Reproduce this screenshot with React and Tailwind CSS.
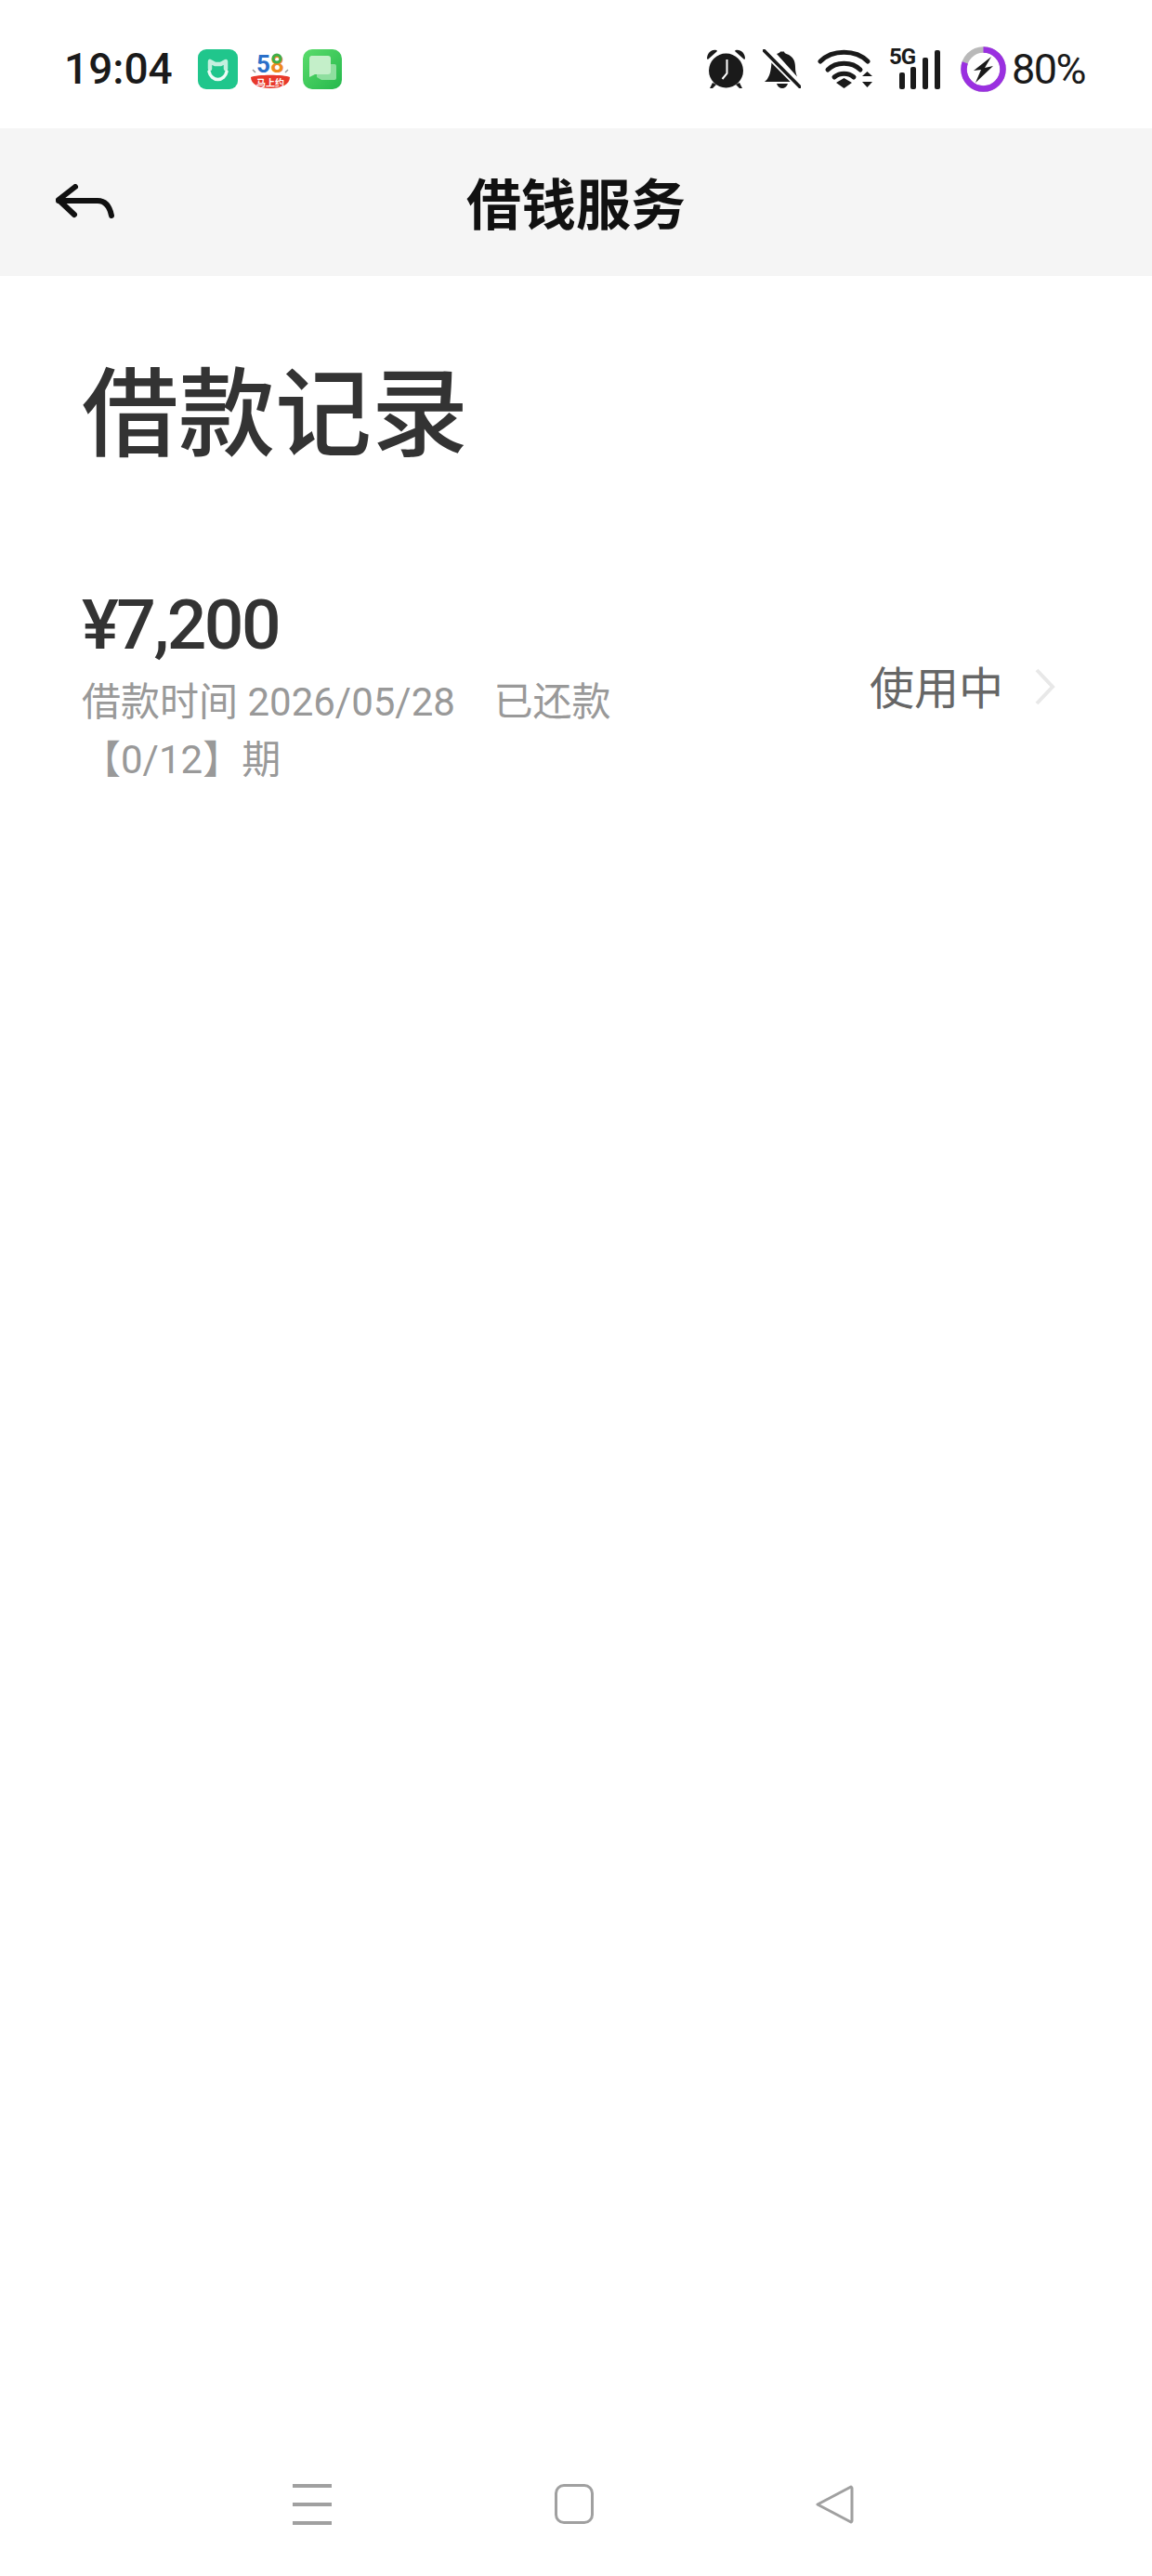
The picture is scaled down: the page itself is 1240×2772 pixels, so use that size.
const cjk = { fontFamily: '"Noto Sans CJK SC", sans-serif' };
const latin = { fontFamily: 'Roboto, "Noto Sans CJK SC", sans-serif' };

function MiHomeIcon() {
  return (
    <svg width="43" height="43" viewBox="0 0 43 43" className="shrink-0">
      <rect width="43" height="43" rx="9" fill="#20c68c" />
      <path d="M13 13l5.500 3h6l5.500-3v8M13 13v8" fill="none" stroke="#c4f0df" strokeWidth="4.500" strokeLinejoin="round" strokeLinecap="round" />
      <path d="M12 24c1 5 5 8.500 9.500 8.500S30 29 31 24" fill="none" stroke="#eefbf6" strokeWidth="3.500" strokeLinecap="round" />
    </svg>
  );
}

function Icon58() {
  return (
    <svg width="44" height="43" viewBox="0 0 44 43" className="shrink-0">
      <text x="7" y="25" fontFamily="Roboto, sans-serif" fontWeight="700" fontSize="26" fill="#2a6fc9">5</text>
      <text x="22" y="25" fontFamily="Roboto, sans-serif" fontWeight="700" fontSize="26" fill="#ef8a1e">8</text>
      <circle cx="29" cy="10" r="4" fill="none" stroke="#3fae49" strokeWidth="3" />
      <path d="M3 22l3 3M41 22l-3 3" stroke="#999" strokeWidth="1.500" />
      <path d="M1 30c6-3 36-3 42 0c0 8-9 12-21 12S1 38 1 30z" fill="#e8392b" />
      <text x="22" y="40" textAnchor="middle" fontFamily='"Noto Sans CJK SC", sans-serif' fontWeight="700" fontSize="10" fill="#fff">马上约</text>
    </svg>
  );
}

function ChatIcon() {
  return (
    <svg width="42" height="43" viewBox="0 0 42 43" className="shrink-0">
      <defs>
        <linearGradient id="chat" x1="0" y1="0" x2="1" y2="1">
          <stop offset="0" stopColor="#5bdc6c" />
          <stop offset="1" stopColor="#25b84c" />
        </linearGradient>
      </defs>
      <rect width="42" height="43" rx="10" fill="url(#chat)" />
      <path d="M15 16h19a2 2 0 0 1 2 2v13a2 2 0 0 1-2 2H20l-5-3z" fill="#8fdf9f" />
      <path d="M9 7h18a3 3 0 0 1 3 3v14a3 3 0 0 1-3 3H13l-6 3V10a3 3 0 0 1 2-3z" fill="#c4efc9" />
    </svg>
  );
}

function AlarmIcon() {
  return (
    <svg width="43" height="44" viewBox="0 0 43 44" className="shrink-0" fill="#1a1a1a">
      <path d="M1 11c0-6 5-10 10-9 1 0 1 1 .5 1.500L2.500 11.500c-.7.600-1.500.300-1.500-.5zM42 11c0-6-5-10-10-9-1 0-1 1-.5 1.500l9 8c.7.600 1.500.300 1.500-.5z" />
      <circle cx="21.500" cy="24" r="18.500" />
      <path d="M7 37l-3 6h3l4-4zM36 37l3 6h-3l-4-4z" />
      <path d="M22.500 12v15l-5 6" fill="none" stroke="#fff" strokeWidth="2" />
    </svg>
  );
}

function BellOffIcon() {
  return (
    <svg width="41" height="42" viewBox="0 0 41 42" className="shrink-0" fill="#1a1a1a">
      <path d="M15 5c2-1 3-1 4-2.500h4c.5 1.500 1 2 2.500 2.500C33 7.500 35 13 35 19c0 5 1 8 2 10.500zM9.500 14l21.500 21H2c2-1.500 3-3 4-5 2-3 3-9 3.500-16zM15 37h12c-1 3.500-3.500 5-6 5s-5-1.500-6-5z" />
      <path d="M1.500 1.500l38 38.500" stroke="#fff" strokeWidth="7" />
      <path d="M1.500 1.500l38.500 39" stroke="#1a1a1a" strokeWidth="3.500" strokeLinecap="round" />
    </svg>
  );
}

function WifiIcon() {
  return (
    <svg width="60" height="44" viewBox="0 0 60 44" className="shrink-0" fill="none" stroke="#1a1a1a" strokeWidth="5" strokeLinecap="round">
      <path d="M3 14C16 1 41 1 54 14" />
      <path d="M11 23c9-9 26-9 35 0" />
      <path d="M18 31c6-5 15-5 21 0" />
      <path d="M20 37l8.500-5 8.500 5-8.500 6z" fill="#1a1a1a" stroke="none" />
      <path d="M48 30l5.500-5 5.500 5zM48 36h11l-5.500 6z" fill="#1a1a1a" stroke="none" />
    </svg>
  );
}

function SignalIcon() {
  return (
    <div className="relative h-[46px] w-[56px] shrink-0">
      <span className="absolute left-0 top-[-3px] text-[24px] font-bold leading-[26px] tracking-[-1px] text-[#1a1a1a]" style={latin}>5G</span>
      <svg width="56" height="46" viewBox="0 0 56 46" className="absolute left-0 top-0" fill="#1a1a1a">
        <rect x="11" y="27" width="6" height="18" rx="2" />
        <rect x="23" y="21" width="6" height="24" rx="2" />
        <rect x="36" y="11" width="6" height="34" rx="2" />
        <rect x="49" y="3" width="6" height="42" rx="2" />
      </svg>
    </div>
  );
}

function BatteryRing() {
  return (
    <svg width="49" height="49" viewBox="0 0 49 49" className="shrink-0">
      <circle cx="24.500" cy="24.500" r="21" fill="none" stroke="#b9b9b9" strokeWidth="6.500" />
      <circle cx="24.500" cy="24.500" r="21" fill="none" stroke="#9a30e0" strokeWidth="6.500" strokeDasharray="105.600 132" transform="rotate(-90 24.500 24.500)" />
      <path d="M33 11L14 26l8-1-6 14 19-18-9 2z" fill="#1a1a1a" />
    </svg>
  );
}

function StatusBar() {
  return (
    <div className="flex h-[138px] items-center pl-[69px] pr-[72px] pt-[10px]">
      <span className="text-[46px] font-medium leading-none text-[#1a1a1a]" style={latin}>19:04</span>
      <div className="ml-[27px] flex items-center gap-[13px]">
        <MiHomeIcon />
        <Icon58 />
        <ChatIcon />
      </div>
      <div className="ml-auto flex items-center">
        <AlarmIcon />
        <div className="ml-[18px]"><BellOffIcon /></div>
        <div className="ml-[18px]"><WifiIcon /></div>
        <div className="ml-[17px]"><SignalIcon /></div>
        <div className="ml-[21px]"><BatteryRing /></div>
        <span className="ml-[6px] text-[45px] leading-none tracking-[-1.500px] text-[#1a1a1a]" style={latin}>80%</span>
      </div>
    </div>
  );
}

function Header() {
  return (
    <div className="relative flex h-[159px] items-center justify-center bg-[#f5f5f5]">
      <svg width="64" height="37" viewBox="0 0 64 37" className="absolute left-[60px] top-[60px]" fill="none" stroke="#111" strokeWidth="6" strokeLinecap="round" strokeLinejoin="round">
        <path d="M21 3L3 17l17 16" />
        <path d="M3 18h42c8 0 13 6 15 16" />
      </svg>
      <h1 className="pb-[3px] text-[59px] font-bold leading-none text-[#111]" style={cjk}>借钱服务</h1>
    </div>
  );
}

function LoanRow() {
  return (
    <div className="mt-[128px] flex items-center justify-between pl-[88px] pr-[104px]">
      <div>
        <div className="text-[75px] font-medium leading-[88px] tracking-[-2.500px] text-[#333]" style={latin}>¥7,200</div>
        <div className="mt-[9px] text-[42px] leading-[62px] text-[#999]" style={latin}>借款时间 2026/05/28&nbsp;&nbsp;&nbsp;&nbsp;已还款</div>
        <div className="text-[42px] leading-[62px] text-[#999]" style={latin}>【0/12】期</div>
      </div>
      <div className="flex items-center">
        <span className="pb-[4px] text-[48px] leading-none text-[#666]" style={cjk}>使用中</span>
        <svg width="22" height="40" viewBox="0 0 22 40" className="ml-[34px]" fill="none" stroke="#e8e8e8" strokeWidth="4">
          <path d="M2 2l17 18L2 38" />
        </svg>
      </div>
    </div>
  );
}

function NavBar() {
  return (
    <div className="mt-auto flex h-[99px] items-start justify-between pl-[315px] pr-[320px]">
      <div className="flex h-[44px] w-[42px] flex-col justify-between">
        <div className="h-[4px] bg-[#a0a0a0]" />
        <div className="h-[4px] bg-[#a0a0a0]" />
        <div className="h-[4px] bg-[#a0a0a0]" />
      </div>
      <div className="h-[43px] w-[42px] rounded-[10px] border-[3px] border-[#a0a0a0]" />
      <svg width="42" height="44" viewBox="0 0 42 44" fill="none" stroke="#a0a0a0" strokeWidth="3" strokeLinejoin="round">
        <path d="M38 3L2 22l36 19a2 2 0 0 0 1-2V5a2 2 0 0 0-1-2z" />
      </svg>
    </div>
  );
}

export default function App() {
  return (
    <div className="flex h-[2772px] w-[1240px] flex-col bg-white">
      <StatusBar />
      <Header />
      <h2 className="ml-[88px] mt-[79px] text-[104px] font-medium leading-[124px] text-[#333]" style={cjk}>借款记录</h2>
      <LoanRow />
      <NavBar />
    </div>
  );
}
